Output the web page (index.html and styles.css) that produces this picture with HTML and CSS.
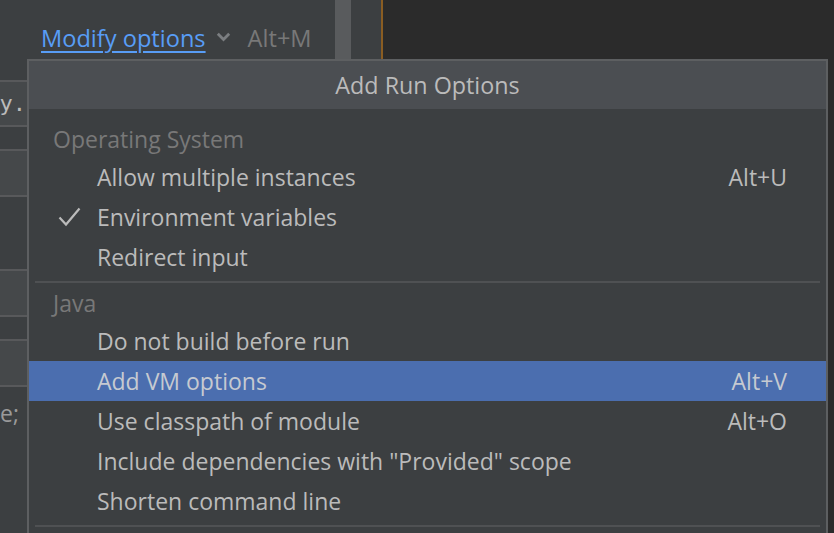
FILE: index.html
```html
<!DOCTYPE html>
<html>
<head>
<meta charset="utf-8">
<link rel="stylesheet" href="styles.css">
</head>
<body>
<div class="app">
  <div class="left">
    <div class="link-row">
      <span class="link">Modify options</span>
      <svg class="chev" width="15" height="10" viewBox="0 0 15 10"><path d="M1.8 1.8 L7.5 7.5 L13.2 1.8" fill="none" stroke="#7b7e81" stroke-width="2.8"/></svg>
      <span class="hint">Alt+M</span>
    </div>
    <div class="cells">
      <div class="cell light h45"><span class="mono">y.</span></div>
      <div class="cell h24"></div>
      <div class="cell light h46"></div>
      <div class="cell h74"></div>
      <div class="cell light h46"></div>
      <div class="cell h24"></div>
      <div class="cell light h46"></div>
      <div class="cell tail"><span>e;</span></div>
    </div>
  </div>
  <div class="strip"></div>
  <div class="gutter"></div>
  <div class="caret"></div>
  <div class="editor"></div>

  <div class="popup">
    <div class="popup-title">Add Run Options</div>
    <div class="popup-body">
      <div class="section">Operating System</div>
      <div class="item"><span class="mark"></span><span class="label">Allow multiple instances</span><span class="key">Alt+U</span></div>
      <div class="item"><span class="mark"><svg width="23" height="20" viewBox="0 0 23 20"><path d="M1.5 10.5 L8 17.5 L21.5 1.5" fill="none" stroke="#bbbbbb" stroke-width="2.2"/></svg></span><span class="label">Environment variables</span></div>
      <div class="item"><span class="mark"></span><span class="label">Redirect input</span></div>
      <div class="sep"></div>
      <div class="section">Java</div>
      <div class="item"><span class="mark"></span><span class="label">Do not build before run</span></div>
      <div class="item selected"><span class="mark"></span><span class="label">Add VM options</span><span class="key">Alt+V</span></div>
      <div class="item"><span class="mark"></span><span class="label">Use classpath of module</span><span class="key">Alt+O</span></div>
      <div class="item"><span class="mark"></span><span class="label">Include dependencies with "Provided" scope</span></div>
      <div class="item"><span class="mark"></span><span class="label">Shorten command line</span></div>
      <div class="sep"></div>
    </div>
  </div>
</div>
</body>
</html>
```

FILE: styles.css
```css
html, body {
  margin: 0;
  padding: 0;
  width: 834px;
  height: 533px;
  overflow: hidden;
  background: #2b2b2b;
}

.app {
  position: relative;
  display: flex;
  width: 834px;
  height: 533px;
  overflow: hidden;
  font-family: "Open Sans", "Noto Sans", sans-serif;
  font-size: 23px;
  color: #bbbbbb;
}

.left {
  width: 335px;
  background: #3c3f41;
  display: flex;
  flex-direction: column;
}

.link-row {
  height: 80px;
  flex: none;
  display: flex;
  align-items: center;
  padding-left: 41px;
  padding-bottom: 4px;
  box-sizing: border-box;
  font-size: 23.6px;
}

.link {
  color: #589df6;
  text-decoration: underline;
  text-underline-offset: 4px;
  text-decoration-thickness: 1.5px;
}

.chev {
  margin-left: 10px;
  margin-right: 17px;
  margin-top: -3px;
}

.hint {
  color: #787878;
}

.cells {
  width: 60px;
  display: flex;
  flex-direction: column;
  flex: 1;
}

.cell {
  flex: none;
  border-top: 2px solid #58595b;
  box-sizing: border-box;
  background: #3c3f41;
  display: flex;
  justify-content: flex-end;
  align-items: center;
  overflow: hidden;
  white-space: nowrap;
  padding-right: 37px;
}

.cell.light { background: #45484a; }
.h45 { height: 45px; padding-right: 34px; }
.h24 { height: 24px; }
.h46 { height: 46px; }
.h74 { height: 74px; }
.cell.tail {
  flex: 1;
  align-items: flex-start;
  padding-top: 10px;
  padding-right: 41px;
}
.cell span { color: #bbbbbb; }
.cell .mono {
  font-family: "DejaVu Sans Mono", "Liberation Mono", monospace;
  font-size: 22px;
}
.cell.tail span { color: #9a9a9a; }

.strip {
  width: 16px;
  background: #595b5d;
}

.gutter {
  width: 30px;
  background: #3c3f41;
}

.caret {
  width: 2px;
  background: #8a5d22;
}

.editor {
  flex: 1;
  background: #2b2b2b;
}

.popup {
  position: absolute;
  left: 27px;
  top: 59px;
  width: 801px;
  height: 474px;
  box-sizing: border-box;
  border: 2px solid #5d5f61;
  border-bottom: none;
  background: #3c3f41;
  display: flex;
  flex-direction: column;
  overflow: hidden;
}

.popup-title {
  flex: none;
  height: 48px;
  background: #4b4e52;
  display: flex;
  align-items: center;
  justify-content: center;
  color: #bbbbbb;
  font-size: 23.3px;
}

.popup-body {
  flex: none;
  padding-top: 12px;
  display: flex;
  flex-direction: column;
}

.section {
  flex: none;
  height: 36px;
  line-height: 36px;
  padding-left: 24px;
  color: #787878;
}

.item {
  flex: none;
  height: 40px;
  display: flex;
  align-items: center;
  padding-right: 39px;
}

.item.selected {
  background: #4b6eaf;
  color: #c6cad1;
}

.mark {
  width: 68px;
  flex: none;
  display: flex;
  align-items: center;
  padding-left: 29px;
  box-sizing: border-box;
}

.label {
  flex: 1;
  white-space: nowrap;
}

.key {
  white-space: nowrap;
}

.sep {
  flex: none;
  height: 2px;
  margin: 4px 6px 2px;
  background: #4f5153;
}
```
